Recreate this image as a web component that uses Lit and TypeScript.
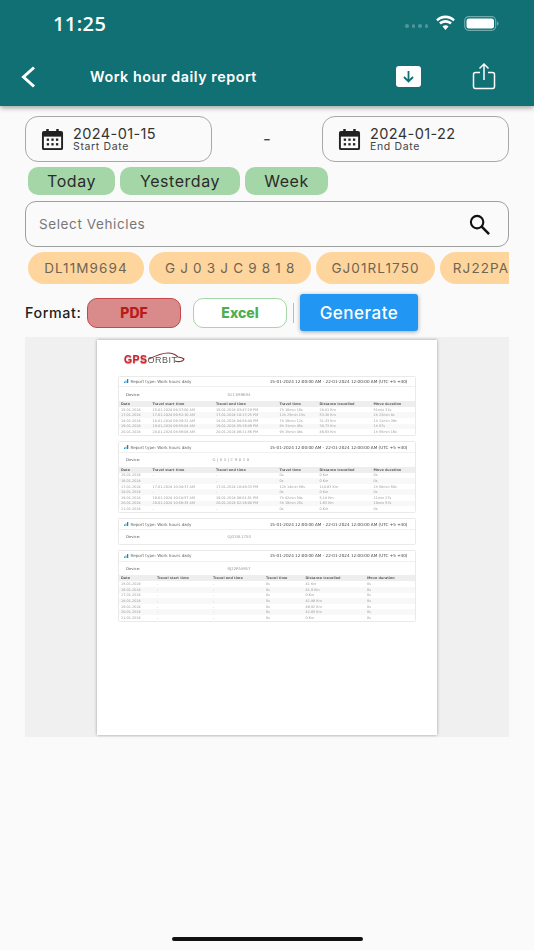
import { LitElement, html, css } from "lit";
import { customElement } from "lit/decorators.js";

const cols1 = ["Date", "Travel start time", "Travel end time", "Travel time", "Distance travelled", "Move duration"];
const t1 = [
  ["15-01-2024", "15-01-2024 08:37:00 AM", "15-01-2024 03:47:19 PM", "7h 10min 19s", "28.81 Km", "51min 31s"],
  ["17-01-2024", "17-01-2024 09:52:10 AM", "17-01-2024 10:17:25 PM", "12h 25min 15s", "53.38 Km", "2h 23min 8s"],
  ["18-01-2024", "18-01-2024 09:39:32 AM", "18-01-2024 04:58:44 PM", "7h 19min 12s", "31.33 Km", "1h 11min 39s"],
  ["19-01-2024", "19-01-2024 09:55:04 AM", "19-01-2024 05:26:49 PM", "8h 31min 45s", "30.73 Km", "1h 57s"],
  ["20-01-2024", "20-01-2024 08:59:08 AM", "20-01-2024 06:21:56 PM", "9h 15min 48s", "46.93 Km", "1h 55min 16s"],
];
const t2 = [
  ["15-01-2024", "-", "-", "0s", "0 Km", "0s"],
  ["16-01-2024", "-", "-", "0s", "0 Km", "0s"],
  ["17-01-2024", "17-01-2024 10:34:37 AM", "17-01-2024 10:49:33 PM", "12h 14min 56s", "114.63 Km", "2h 58min 50s"],
  ["18-01-2024", "-", "-", "0s", "0 Km", "0s"],
  ["19-01-2024", "19-01-2024 10:18:57 AM", "19-01-2024 06:01:51 PM", "7h 42min 54s", "5.18 Km", "21min 27s"],
  ["20-01-2024", "20-01-2024 10:56:35 AM", "20-01-2024 02:16:00 PM", "3h 19min 25s", "1.63 Km", "10min 57s"],
  ["21-01-2024", "-", "-", "0s", "0 Km", "0s"],
];
const t4 = [
  ["15-01-2024", "-", "-", "0s", "41 Km", "0s"],
  ["16-01-2024", "-", "-", "0s", "41.9 Km", "0s"],
  ["17-01-2024", "-", "-", "0s", "0 Km", "0s"],
  ["18-01-2024", "-", "-", "0s", "41.86 Km", "0s"],
  ["19-01-2024", "-", "-", "0s", "46.92 Km", "0s"],
  ["20-01-2024", "-", "-", "0s", "42.05 Km", "0s"],
  ["21-01-2024", "-", "-", "0s", "0 Km", "0s"],
];

const calendar = html`<svg class="cal" viewBox="0 0 24 24"><path fill="#222" d="M5.500 1h2.600v2.200h7.800V1h2.600v2.200H21a2 2 0 0 1 2 2V21a2 2 0 0 1-2 2H3a2 2 0 0 1-2-2V5.200a2 2 0 0 1 2-2h2.500z"/><rect x="3" y="9" width="18" height="12" fill="#fafafa"/><g fill="#222"><rect x="6" y="11" width="2.400" height="2.400"/><rect x="10.800" y="11" width="2.400" height="2.400"/><rect x="15.600" y="11" width="2.400" height="2.400"/><rect x="6" y="15.800" width="2.400" height="2.400"/><rect x="10.800" y="15.800" width="2.400" height="2.400"/><rect x="15.600" y="15.800" width="2.400" height="2.400"/></g></svg>`;

@customElement("app-root")
export class AppRoot extends LitElement {
  static styles = css`
    :host { display: block; width: 534px; height: 950px; background: #fafafa; font-family: "Inter", "Liberation Sans", sans-serif; color: #222; overflow: hidden; position: relative; }
    .top { background: #107074; height: 106px; box-shadow: 0 2px 5px rgba(0,0,0,.35); color: #fff; position: relative; z-index: 2; box-sizing: border-box; }
    .status { height: 50px; display: flex; align-items: center; padding: 0 35px 3px 53px; box-sizing: border-box; }
    .time { font-family: "Open Sans", sans-serif; font-size: 20px; font-weight: 600; letter-spacing: .4px; flex: 1; }
    .dots { display: flex; gap: 3px; margin-right: 7px; margin-top: 5px; }
    .dots i { width: 3.500px; height: 3.500px; border-radius: 50%; background: #4f9497; }
    .wifi { width: 21px; height: 16px; margin-right: 8px; margin-top: -1px; }
    .batt { width: 35px; height: 15px; }
    .nav { height: 56px; display: flex; align-items: center; padding-left: 20px; }
    .back { width: 17px; height: 24px; margin-right: 53px; margin-top: -2px; }
    .title { font-size: 14.300px; font-weight: 600; flex: 1; letter-spacing: .55px; margin-top: -3px; }
    .dl { width: 25px; height: 21px; margin-right: 51px; margin-top: -4px; }
    .share { width: 24px; height: 28px; margin-right: 38px; margin-top: -5px; }
    .body { padding: 10px 25px 0; }
    .dates { display: flex; justify-content: space-between; align-items: center; }
    .date { width: 187px; height: 46px; box-sizing: border-box; border: 1px solid #a8a8a8; border-radius: 13px; display: flex; align-items: center; gap: 9px; padding-left: 15px; }
    .cal { width: 23px; height: 23px; flex: none; }
    .dval { font-size: 14.500px; line-height: 15px; letter-spacing: .4px; color: #333; }
    .dlab { font-size: 10.500px; line-height: 11px; letter-spacing: .65px; color: #444; }
    .dash { font-size: 17px; color: #444; }
    .chips { display: flex; gap: 5px; padding: 5px 0 0 3px; }
    .chip { height: 28px; border-radius: 10px; background: #a5d6a7; display: flex; align-items: center; justify-content: center; font-size: 16px; letter-spacing: .55px; color: #2b2b2b; }
    .search { height: 46px; margin-top: 6px; box-sizing: border-box; border: 1.300px solid #9e9e9e; border-radius: 11px; display: flex; align-items: center; justify-content: space-between; padding: 0 17px 0 13px; font-size: 13.500px; letter-spacing: .6px; color: #777; }
    .search svg { width: 23px; height: 23px; }
    .veh { display: flex; gap: 5px; padding: 5px 0 0 3px; overflow: hidden; white-space: nowrap; }
    .v { flex: none; height: 32px; border-radius: 16px; background: #ffd59e; color: #6e6553; display: flex; align-items: center; justify-content: center; font-size: 13.500px; letter-spacing: 1.100px; box-sizing: border-box; }
    .v.sp { letter-spacing: .7px; }
    .fmt { display: flex; align-items: center; margin-top: 10px; height: 37px; }
    .fl { width: 62px; font-size: 14.300px; font-weight: 500; letter-spacing: .6px; white-space: nowrap; }
    .btn { width: 94px; height: 30px; box-sizing: border-box; border-radius: 10px; display: flex; align-items: center; justify-content: center; font-size: 14px; font-weight: 800; }
    .pdf { background: #d98a8a; border: 1px solid #c4474a; color: #b71c1c; margin-right: 12px; }
    .xl { background: #fff; border: 1px solid #a5d6a7; color: #4caf50; }
    .sep { width: 1px; height: 20px; background: #bbb; margin: 0 6px; }
    .gen { width: 118px; height: 37px; background: #2196f3; color: #fff; border-radius: 3px; display: flex; align-items: center; justify-content: center; font-size: 17px; font-weight: 500; letter-spacing: .5px; box-shadow: 0 1px 4px rgba(0,0,0,.35); }
    .pv { margin-top: 6px; height: 400px; background: #f0f0f0; display: flex; justify-content: center; padding-top: 3px; box-sizing: border-box; }
    .page { width: 340px; height: 395px; background: #fff; box-shadow: 0 0 3px rgba(0,0,0,.35); padding: 13px 21px 0 21px; box-sizing: border-box; font-family: "DejaVu Sans", sans-serif; color: #666; }
    .blur { filter: blur(.45px); }
    .logo { height: 22.700px; padding: 1px 0 0 6px; display: flex; align-items: flex-start; position: relative; box-sizing: border-box; }
    .lg { font-family: "Liberation Sans", sans-serif; font-weight: 700; font-size: 10.500px; line-height: 11px; color: #d61f26; letter-spacing: .4px; text-shadow: 0 1px 1px rgba(120,0,0,.5); }
    .lb { font-family: "Liberation Sans", sans-serif; font-size: 9px; line-height: 12px; color: #555; letter-spacing: .5px; }
    .swoosh { width: 38px; height: 11px; position: absolute; left: 29px; top: -1px; }
    .card { border: .5px solid #eaeaea; border-radius: 1.500px; margin-bottom: 5.600px; box-shadow: 0 0 1px rgba(0,0,0,.06); }
    .ch { height: 9.500px; display: flex; align-items: center; border-bottom: .5px solid #f0f0f0; padding: 0 7.500px 0 5px; font-size: 4.100px; white-space: nowrap; }
    .bars { width: 4.500px; height: 4px; margin-right: 2px; flex: none; }
    .ct { flex: 1; }
    .rg { color: #444; font-size: 4.150px; }
    .dv { height: 13.700px; display: flex; align-items: center; font-size: 3.800px; }
    .dv b { font-weight: 400; color: #555; margin-left: 7px; width: 101.500px; flex: none; }
    .dv span { color: #999; }
    .dv span.wide { margin-left: -15px; letter-spacing: .2px; }
    .tr { display: grid; height: 5.600px; align-items: center; font-size: 3.400px; color: #999; padding-left: 2px; white-space: nowrap; }
    .tr.h { height: 6px; background: #eee; color: #666; font-weight: 600; font-size: 3.400px; }
    .tr:nth-child(odd):not(.h) { background: #f8f8f8; }
    .c1 { grid-template-columns: 31.500px 63.500px 63.500px 40px 54px 1fr; }
    .c4 { grid-template-columns: 36px 56px 53px 39.500px 61.500px 1fr; }
    .home { position: absolute; left: 172px; top: 937px; width: 191px; height: 4px; border-radius: 2px; background: #111; }
  `;

  private table(rows: string[][], cls: string) {
    return html`<div><div class="tr h ${cls}">${cols1.map((c) => html`<div>${c}</div>`)}</div>
      ${rows.map((r) => html`<div class="tr ${cls}">${r.map((c) => html`<div>${c}</div>`)}</div>`)}</div>`;
  }

  private card(device: string, body: unknown, wide = false) {
    return html`<div class="card">
      <div class="ch">
        <svg class="bars" viewBox="0 0 9 8"><rect x="0" y="5" width="2" height="3" fill="#2a9bd6"/><rect x="3" y="3" width="2" height="5" fill="#2a9bd6"/><rect x="6" y="0" width="2.500" height="8" fill="#2a7fb0"/></svg>
        <span class="ct">Report type: Work hours daily</span>
        <span class="rg">15-01-2024 12:00:00 AM - 22-01-2024 12:00:00 AM (UTC +5 +30)</span>
      </div>
      <div class="dv"><b>Device:</b><span class="${wide ? "wide" : ""}">${device}</span></div>
      ${body}
    </div>`;
  }

  render() {
    return html`
      <div class="top">
        <div class="status">
          <span class="time">11:25</span>
          <span class="dots"><i></i><i></i><i></i><i></i></span>
          <svg class="wifi" viewBox="0 0 21 16"><path fill="#fff" d="M10.500 3.200c3 0 5.700 1.200 7.700 3.100l1.700-1.900C17.400 2 14.100.500 10.500.500S3.600 2 1.100 4.400l1.700 1.900c2-1.900 4.700-3.100 7.700-3.100z"/><path fill="#fff" d="M10.500 7.700c1.800 0 3.400.7 4.600 1.800l1.800-2c-1.700-1.500-3.900-2.500-6.400-2.500s-4.700 1-6.400 2.500l1.800 2c1.200-1.100 2.800-1.800 4.600-1.800z"/><path fill="#fff" d="M10.500 10.200c-1.200 0-2.200.4-3 1.200l3 3.500 3-3.500c-.8-.8-1.800-1.200-3-1.200z"/></svg>
          <svg class="batt" viewBox="0 0 35 15"><rect x=".7" y=".7" width="31" height="13.600" rx="4" fill="none" stroke="#6fa9ab" stroke-width="1.200"/><rect x="2.500" y="2.500" width="27.500" height="10" rx="2.500" fill="#fff"/><path d="M33 5.500c1 .3 1.500 1 1.500 2s-.5 1.700-1.500 2z" fill="#6fa9ab"/></svg>
        </div>
        <div class="nav">
          <svg class="back" viewBox="0 0 17 24"><path d="M14 2.500 3.500 12 14 21.500" fill="none" stroke="#fff" stroke-width="3"/></svg>
          <span class="title">Work hour daily report</span>
          <svg class="dl" viewBox="0 0 25 21"><rect width="25" height="21" rx="3" fill="#fff"/><path d="M12.500 5v10M8 11l4.500 4.500L17 11" fill="none" stroke="#107074" stroke-width="1.800"/></svg>
          <svg class="share" viewBox="0 0 24 28"><path d="M12 18V2M7.500 6.500 12 2l4.500 4.500M8 10.500H3.500a2 2 0 0 0-2 2v12a2 2 0 0 0 2 2h17a2 2 0 0 0 2-2v-12a2 2 0 0 0-2-2H16" fill="none" stroke="#fff" stroke-width="1.500"/></svg>
        </div>
      </div>
      <div class="body">
        <div class="dates">
          <div class="date">${calendar}<div><div class="dval">2024-01-15</div><div class="dlab">Start Date</div></div></div>
          <span class="dash">-</span>
          <div class="date">${calendar}<div><div class="dval">2024-01-22</div><div class="dlab">End Date</div></div></div>
        </div>
        <div class="chips">
          <div class="chip" style="width:87px">Today</div>
          <div class="chip" style="width:120px">Yesterday</div>
          <div class="chip" style="width:83px">Week</div>
        </div>
        <div class="search">
          <span>Select Vehicles</span>
          <svg viewBox="0 0 24 24"><circle cx="9.500" cy="9.500" r="6.500" fill="none" stroke="#111" stroke-width="2.200"/><path d="M14.300 14.300 22 22" stroke="#111" stroke-width="2.600"/></svg>
        </div>
        <div class="veh">
          <div class="v" style="width:116px">DL11M9694</div>
          <div class="v sp" style="width:162px">G J 0 3 J C 9 8 1 8</div>
          <div class="v" style="width:119px">GJ01RL1750</div>
          <div class="v" style="width:119px">RJ22PA3957</div>
        </div>
        <div class="fmt">
          <span class="fl">Format:</span>
          <div class="btn pdf">PDF</div>
          <div class="btn xl">Excel</div>
          <div class="sep"></div>
          <div class="gen">Generate</div>
        </div>
        <div class="pv">
          <div class="page">
            <div class="blur">
              <div class="logo">
                <span class="lg">GPS</span><span class="lb">ORBIT</span>
                <svg class="swoosh" viewBox="0 0 38 11"><path d="M2 7C10 3 16 1 21 1c5 0 8 2 10 4 3 .3 5 1 6 2-1 3-6 3-9 2" fill="none" stroke="#8a3038" stroke-width="1.100"/></svg>
              </div>
              ${this.card("DL11M9694", this.table(t1, "c1"))}
              ${this.card("G J 0 3 J C 9 8 1 8", this.table(t2, "c1"), true)}
              ${this.card("GJ01RL1750", "")}
              ${this.card("RJ22PA3957", this.table(t4, "c4"))}
            </div>
          </div>
        </div>
      </div>
      <div class="home"></div>
    `;
  }
}
